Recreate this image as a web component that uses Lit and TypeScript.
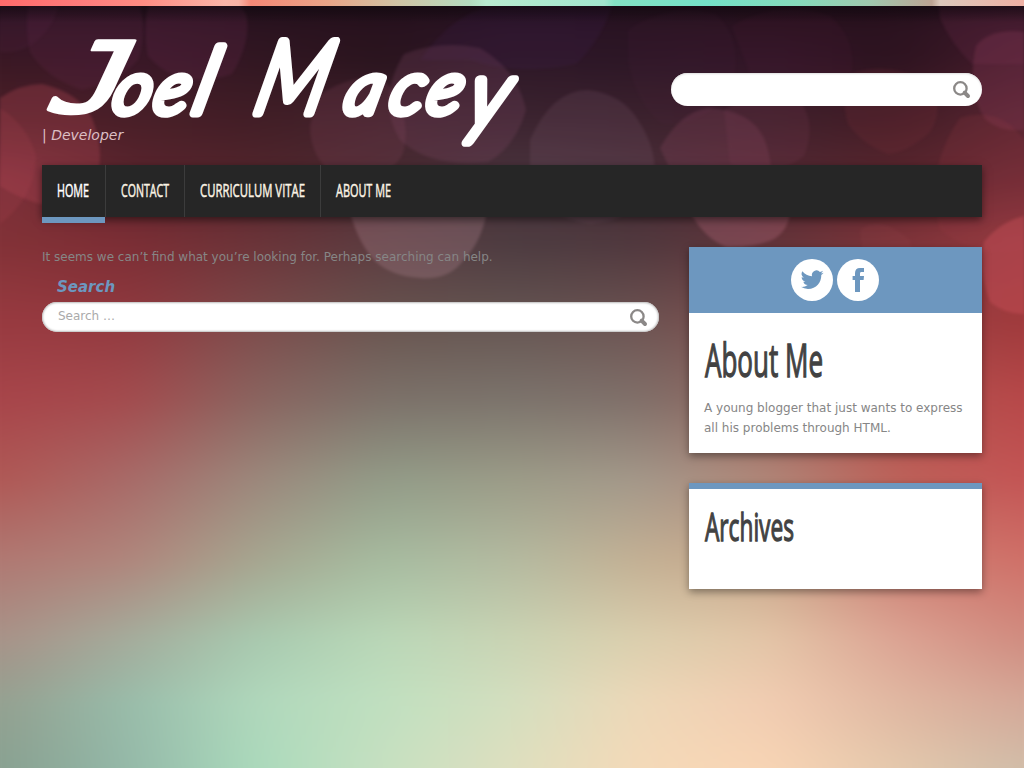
import { LitElement, html, svg, css } from "lit";
import { customElement, property, state } from "lit/decorators.js";

const COLS = [0, 128, 256, 384, 512, 640, 768, 896, 1024];

// Colour mesh of the page backdrop: one entry per row, one colour per column.
const MESH: Array<[number, string]> = [
  [6, "1d0f17 1e0f18 1c0e16 1b0d15 1c0e18 1c0e17 1c0d16 1b0c14 220f1a"],
  [22, "301525 301524 2a1320 28121e 2a1425 291322 2b1320 2a121f 3a1828"],
  [60, "3a1824 3a1828 321722 2a141e 2e1828 2d1726 321628 2d131f 451c2c"],
  [120, "4e2028 4a1f28 421e26 42232d 3c2430 3c222e 40202c 431d26 5a2632"],
  [180, "7c303a 5c252e 54262d 4c2c32 4c3640 4b303a 542a34 5a262e 702c36"],
  [240, "823237 7b2d34 6a3338 5a3b40 4c3b40 4f373d 603339 7c3238 943a40"],
  [320, "983a40 92393f 7c4b4b 68544f 655552 6c5352 804b4b 984044 a03a3c"],
  [400, "a8454a a44b4e 8a6560 7c726a 7c746c 80706a 98655e b05450 b84849"],
  [480, "b05855 a86a68 9c887c 929c88 9c9c88 a4988a b08678 bc6058 c45555"],
  [560, "b07872 b0857c a6a690 a6bca0 b4baa0 c4b094 c8a88c cc8074 d07068"],
  [640, "a89288 a4ac9c a8cab0 bad8b8 cad4b4 dccfae e4c6a8 dca494 d08c80"],
  [704, "94a090 98bcaa b0d8bc c0e0c0 d4dfc0 eed8b8 f2cdb2 e0b8a2 d4a898"],
  [768, "88a090 94b8a8 aadabc c6e0c0 dedfbe f4d9b8 f8d4b4 e4c8ac d0bca8"],
];

// Soft light discs: path, fill, opacity.
const BOKEH: Array<[string, string, number]> = [
  ["M30 0 Q24 20 30 52 Q46 78 82 90 Q118 82 138 60 Q148 30 138 0Z", "#6a2c50", 0.2],
  ["M150 0 Q142 26 148 56 Q180 92 232 74 Q252 40 246 14 L236 0Z", "#6a2c50", 0.24],
  ["M0 0 L60 0 Q54 30 30 46 Q14 54 0 52Z", "#5c2848", 0.18],
  ["M0 98 Q20 84 42 84 Q78 92 92 118 Q104 150 98 172 Q84 196 40 204 Q14 196 0 186Z", "#b04452", 0.32],
  ["M0 108 Q28 126 36 156 Q36 196 0 224Z", "#c04c5a", 0.14],
  ["M420 60 Q450 18 484 8 L614 0 Q602 40 576 64 Q520 76 470 60Z", "#44205c", 0.16],
  ["M404 54 Q440 40 480 48 Q518 70 526 110 Q516 146 488 162 Q430 168 400 140 Q376 100 404 54Z", "#824c68", 0.24],
  ["M318 96 Q350 74 382 78 Q412 110 404 150 Q396 178 340 180 Q310 160 310 126Z", "#8a4a60", 0.2],
  ["M348 204 Q372 192 430 190 Q476 196 486 216 Q480 244 462 262 Q448 280 420 278 Q390 276 374 260 Q356 240 348 204Z", "#a8808a", 0.32],
  ["M530 140 Q552 90 588 90 Q622 94 638 120 Q658 150 654 180 Q640 220 590 224 Q540 216 530 180Z", "#836074", 0.19],
  ["M628 30 Q668 2 716 14 Q744 40 732 90 Q700 128 662 124 Q634 100 628 60Z", "#552544", 0.1],
  ["M732 26 Q780 -2 830 16 Q862 44 848 88 Q800 114 758 96Z", "#622344", 0.1],
  ["M660 148 Q680 112 708 108 Q750 110 764 138 Q774 164 770 190 Q730 202 680 190Z", "#98506a", 0.22],
  ["M724 110 Q760 90 802 104 Q816 126 804 156 Q774 180 730 164Z", "#83405a", 0.16],
  ["M850 74 Q890 60 932 84 Q944 110 930 132 Q908 152 888 154 Q862 144 848 124 Q840 96 850 74Z", "#8a3640", 0.16],
  ["M938 0 L1024 0 L1024 64 L972 64 Q950 42 940 18Z", "#7a3054", 0.2],
  ["M976 46 Q990 28 1024 32 L1024 130 Q1000 132 986 120 Q966 92 976 46Z", "#903e5c", 0.27],
  ["M960 118 Q1000 106 1024 140 L1024 250 Q980 260 940 230 Q924 170 960 118Z", "#a03c46", 0.16],
  ["M690 212 L790 212 Q788 232 772 240 Q752 248 726 247 Q704 238 690 212Z", "#a45e70", 0.4],
  ["M860 230 Q880 214 910 240 L912 250 L862 250Z", "#9c4850", 0.14],
  ["M984 242 Q1000 222 1024 216 L1024 314 Q1004 314 990 302 Q978 270 984 242Z", "#d0525c", 0.38],
];

@customElement("page-backdrop")
export class PageBackdrop extends LitElement {
  static styles = css`
    :host { display: block; }
    svg { display: block; width: 1024px; height: 768px; }
  `;

  render() {
    return html`<svg viewBox="0 0 1024 768" aria-hidden="true">
      <defs>
        <filter id="soft" x="-10%" y="-10%" width="120%" height="120%"><feGaussianBlur stdDeviation="1.8" /></filter>
        <filter id="blend" color-interpolation-filters="sRGB" filterUnits="userSpaceOnUse" x="-60" y="-60" width="1144" height="888"><feGaussianBlur stdDeviation="26 8" /></filter>
        <linearGradient id="strip">
          <stop offset="0" stop-color="#ff6b6b" /><stop offset=".08" stop-color="#ff7c7c" />
          <stop offset=".14" stop-color="#ff8d84" /><stop offset=".22" stop-color="#fbb5a9" />
          <stop offset=".233" stop-color="#f9b3a6" /><stop offset=".245" stop-color="#f58877" />
          <stop offset=".32" stop-color="#e8a488" /><stop offset=".39" stop-color="#d0c4a6" />
          <stop offset=".46" stop-color="#b4dcc0" /><stop offset=".475" stop-color="#b9ebd0" />
          <stop offset=".59" stop-color="#a2e6ce" /><stop offset=".6" stop-color="#84e2c4" />
          <stop offset=".69" stop-color="#74e2c8" /><stop offset=".78" stop-color="#86dabb" />
          <stop offset=".85" stop-color="#a0c8ae" /><stop offset=".91" stop-color="#bda494" />
          <stop offset=".918" stop-color="#dcc8bc" /><stop offset="1" stop-color="#efb0a4" />
        </linearGradient>
        ${MESH.map(([y, row], i) => {
          const prev = i ? MESH[i - 1][0] : 0;
          return svg`
            <linearGradient id=${"r" + i} gradientUnits="userSpaceOnUse" x1="0" y1="0" x2="1024" y2="0">
              ${row.split(" ").map((c, k) => svg`<stop offset=${COLS[k] / 1024} stop-color=${"#" + c}></stop>`)}
            </linearGradient>
            <linearGradient id=${"f" + i} gradientUnits="userSpaceOnUse" x1="0" y1=${prev} x2="0" y2=${y}>
              <stop offset="0" stop-color="#fff" stop-opacity="0"></stop>
              <stop offset="1" stop-color="#fff"></stop>
            </linearGradient>
            <mask id=${"m" + i} maskUnits="userSpaceOnUse" x="-60" y="-60" width="1144" height="888">
              <rect x="-60" y=${i ? prev : -60} width="1144" height=${888 - prev} fill=${i ? `url(#f${i})` : "#fff"}></rect>
            </mask>`;
        })}
      </defs>
      <g filter="url(#blend)">
      ${MESH.map((_, i) => {
        const prev = i ? MESH[i - 1][0] : 0;
        return svg`<rect x="-60" y=${i ? prev : -60} width="1144" height=${888 - prev} fill=${`url(#r${i})`} mask=${`url(#m${i})`}></rect>`;
      })}
      </g>
      ${BOKEH.map(([d, fill, o]) => svg`<path d=${d} fill=${fill} opacity=${o} filter="url(#soft)"></path>`)}
      <linearGradient id="shade" x2="0" y2="1">
        <stop offset="0" stop-color="#120810" stop-opacity=".6" /><stop offset="1" stop-color="#120810" stop-opacity="0" />
      </linearGradient>
      <rect y="6" width="1024" height="16" fill="url(#shade)" />
      <rect width="1024" height="6" fill="url(#strip)" />
    </svg>`;
  }
}

// Condensed lettering: real text squeezed horizontally to a given width.
@customElement("narrow-text")
export class NarrowText extends LitElement {
  @property() text = "";
  @property({ type: Number }) size = 18;
  @property({ type: Number }) width = 40;
  @state() private squeeze = 0.65;

  static styles = css`
    :host { display: block; }
    svg { display: block; overflow: visible; }
    text { font-family: "Open Sans", "Noto Sans", sans-serif; fill: currentColor; stroke: currentColor; }
  `;

  firstUpdated() {
    const natural = this.renderRoot.querySelector("text")!.getComputedTextLength();
    if (natural > 0) this.squeeze = this.width / natural;
  }

  render() {
    const cap = Math.round(this.size * 0.714);
    return html`<svg width=${this.width} height=${cap}>
      <g transform="translate(0 ${cap}) scale(${this.squeeze} 1)">
        <text font-size=${this.size} stroke-width=${this.size > 30 ? 1.3 : 0.5}>${this.text}</text>
      </g>
    </svg>`;
  }
}

const magnifier = html`<svg class="glass" width="18" height="18" viewBox="0 0 18 18" aria-hidden="true">
  <circle cx="7.4" cy="7.4" r="6.2" fill="none" stroke="#8b8887" stroke-width="2.3" />
  <path d="M11.6 11.6L15 15" stroke="#8b8887" stroke-width="4" stroke-linecap="round" />
</svg>`;

const NAV: Array<[string, number]> = [["HOME", 32], ["CONTACT", 48], ["CURRICULUM VITAE", 105], ["ABOUT ME", 55]];

@customElement("app-root")
export class AppRoot extends LitElement {
  static styles = css`
    :host { display: block; font: 12px/20px "DejaVu Sans", sans-serif; color: #868686; }
    * { box-sizing: border-box; }
    .stack { display: grid; width: 1024px; height: 768px; overflow: hidden; }
    .stack > * { grid-area: 1 / 1; }
    .page { padding: 0 42px; z-index: 1; }
    header { display: flex; justify-content: space-between; height: 165px; }
    .brand { margin: 0; font-weight: normal; }
    .brand svg { display: block; overflow: visible; }
    .brand text { font-family: Lato, sans-serif; font-style: italic; font-weight: 300; fill: #fff; stroke: #fff; stroke-linejoin: round; stroke-linecap: round; }
    .brand .hook { font-family: "DejaVu Sans Mono", monospace; font-style: normal; font-weight: normal; }
    .tagline { margin: -1px 0 0; font-size: 14px; font-style: italic; line-height: 20px; color: #dcbfc4; }
    .field { display: flex; align-items: center; justify-content: space-between; background: #fff; border-radius: 17px; }
    .top-field { width: 311px; height: 33px; margin-top: 73px; padding: 0 11px 0 16px; justify-content: flex-end; box-shadow: inset 0 1px 2px #ddd; }
    nav { display: flex; height: 52px; background: #262626; box-shadow: 0 3px 8px rgba(0, 0, 0, .5); }
    .tab { display: flex; padding: 19px 15px 0; color: #fbf3e4; border-right: 1px solid #3c3c3c; }
    .tab:last-child { border: 0; }
    .tab.on { color: #fff; box-shadow: 0 6px 0 #6d97bf; padding-right: 16px; border-right: 0; }
    .tab.on + .tab { border-left: 1px solid #3c3c3c; }
    .columns { display: grid; grid-template-columns: 617px 293px; gap: 30px; padding-top: 30px; align-items: start; }
    p { margin: 0; }
    .label { margin: 10px 0 0 15px; font-size: 15px; font-weight: bold; font-style: italic; line-height: 20px; color: #6d97bf; }
    .main-field { height: 30px; margin-top: 5px; padding: 0 11px 2px 16px; color: #aaa; box-shadow: inset 0 0 2px 1px #bbb; }
    .main-field .glass { margin-top: 3px; }
    aside { display: grid; gap: 30px; }
    .card { background: #fff; box-shadow: 0 3px 8px rgba(0, 0, 0, .4); color: #868686; }
    .social { display: flex; gap: 4px; height: 66px; padding: 12px 0 0 102px; background: #6d97bf; }
    .social svg { display: block; }
    .about { height: 140px; padding: 31px 15px 0 15px; }
    .archives { height: 106px; border-top: 6px solid #6d97bf; padding: 24px 16px 0; }
    .title { margin: 0 0 0 1px; color: #424242; font-weight: normal; }
    .archives .title { margin-left: 0; }
    .about p { margin-top: 21px; }
  `;

  render() {
    return html`<div class="stack">
      <page-backdrop></page-backdrop>
      <div class="page">
        <header>
          <div>
            <h1 class="brand">
              <svg width="490" height="126">
                <g transform="translate(0 113) skewX(-14)">
                  <g transform="translate(-1 -1) skewX(-12) scale(1.32 1)"><text class="hook" y="0" font-size="97" stroke-width="4">J</text></g>
                  <text y="0"><tspan x="68" font-size="72" stroke-width="8.5">o</tspan><tspan x="109" font-size="72" stroke-width="8.5">e</tspan><tspan x="148" font-size="91" stroke-width="9">l</tspan></text>
                  <g transform="translate(209 0) scale(.84 1)"><text y="0" font-size="101" stroke-width="9">M</text></g>
                  <text y="0"><tspan x="300" font-size="72" stroke-width="8.5">a</tspan><tspan x="345" font-size="72" stroke-width="8.5">c</tspan><tspan x="382" font-size="72" stroke-width="8.5">e</tspan></text>
                  <g transform="translate(425 13) scale(.9 1)"><text y="0" font-size="93" stroke-width="9">y</text></g>
                </g>
              </svg>
            </h1>
            <p class="tagline">| Developer</p>
          </div>
          <div class="field top-field">${magnifier}</div>
        </header>
        <nav>
          ${NAV.map(([t, w], i) => html`<a class="tab ${i === 0 ? "on" : ""}"><narrow-text .text=${t} .width=${w} .size=${18.2}></narrow-text></a>`)}
        </nav>
        <div class="columns">
          <main>
            <p>It seems we can’t find what you’re looking for. Perhaps searching can help.</p>
            <p class="label">Search</p>
            <div class="field main-field"><span>Search …</span>${magnifier}</div>
          </main>
          <aside>
            <section class="card">
              <div class="social">
                <svg width="42" height="42" viewBox="0 0 42 42"><circle cx="21" cy="21" r="21" fill="#fff" />
                  <path transform="translate(9.8 9.3) scale(.95)" fill="#6d97bf" d="M23.95 4.57a10 10 0 0 1-2.82.77 4.96 4.96 0 0 0 2.16-2.72c-.95.55-2 .95-3.13 1.18a4.92 4.92 0 0 0-8.38 4.48C7.69 8.1 4.07 6.13 1.64 3.16a4.92 4.92 0 0 0 1.52 6.57 4.9 4.9 0 0 1-2.23-.61v.06a4.92 4.92 0 0 0 3.95 4.83 5 5 0 0 1-2.21.08 4.94 4.94 0 0 0 4.6 3.42A9.87 9.87 0 0 1 0 19.54a14 14 0 0 0 7.55 2.21c9.05 0 14-7.5 14-13.98 0-.21 0-.42-.02-.63a9.94 9.94 0 0 0 2.46-2.55z" />
                </svg>
                <svg width="42" height="42" viewBox="0 0 42 42"><circle cx="21" cy="21" r="21" fill="#fff" />
                  <path fill="#6d97bf" d="M18 33V21h-2.4v-4H18v-2.8C18 10.7 19.8 9 23 9h4v4h-2.4c-1.2 0-1.6.6-1.6 1.7V17h4l-.4 4H23v12z" />
                </svg>
              </div>
              <div class="about">
                <h2 class="title"><narrow-text .text=${"About Me"} .width=${118} .size=${46}></narrow-text></h2>
                <p>A young blogger that just wants to express all his problems through HTML.</p>
              </div>
            </section>
            <section class="card archives">
              <h2 class="title"><narrow-text .text=${"Archives"} .width=${89} .size=${39}></narrow-text></h2>
            </section>
          </aside>
        </div>
      </div>
    </div>`;
  }
}
